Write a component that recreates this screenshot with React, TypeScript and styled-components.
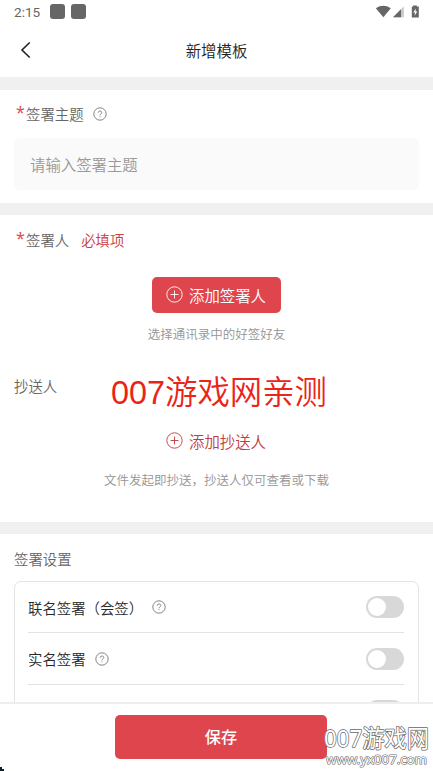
import React from "react";
import styled, { createGlobalStyle, css } from "styled-components";

const Global = createGlobalStyle`
  * { box-sizing: border-box; }
  html, body { margin: 0; background: #fff; overflow: hidden; }
  body { font-family: "Noto Sans CJK SC", "Noto Sans", sans-serif; font-weight: 350; }
  button, input { font-family: inherit; font-weight: inherit; }
`;

const Screen = styled.div`
  position: relative;
  width: 433px;
  height: 771px;
  display: flex;
  flex-direction: column;
  overflow: hidden;
  background: #fff;
`;

const StatusBar = styled.div`
  display: flex;
  align-items: center;
  flex: none;
  height: 24px;
  padding: 0 13px 0 14px;
  color: #666;
  font: 400 13.6px/24px Roboto, sans-serif;
`;

const Clock = styled.span`
  width: 36px;
`;

const Notice = styled.i`
  width: 15px;
  height: 15px;
  margin: 0 6px 1px 0;
  border-radius: 3px;
  background: #666;
`;

const StatusIcons = styled.svg`
  display: block;
  margin-left: auto;
`;

const Header = styled.header`
  display: grid;
  grid-template-columns: 60px 1fr 60px;
  align-items: center;
  flex: none;
  height: 53px;
  padding-bottom: 2px;
`;

const Back = styled.button`
  display: flex;
  padding: 0 0 0 20px;
  border: 0;
  background: none;
`;

const Title = styled.h1`
  margin: 0;
  color: #222;
  font-size: 15.4px;
  font-weight: 350;
  line-height: 24px;
  text-align: center;
`;

const Section = styled.section<{ $height?: number; $band: number; $top?: number }>`
  display: flex;
  flex-direction: column;
  flex: ${(p) => (p.$height ? "none" : "1")};
  ${(p) => p.$height && css`height: ${p.$height}px;`}
  min-height: 0;
  padding: ${(p) => p.$top ?? 14}px 15px 0 14px;
  border-top: ${(p) => p.$band}px solid #f0f0f0;
  overflow: hidden;
`;

const Label = styled.div`
  display: flex;
  align-items: center;
  flex: none;
  height: 22px;
  color: #666;
  font-size: 14.4px;
  line-height: 22px;
  white-space: nowrap;
`;

const Star = styled.span`
  width: 12px;
  padding: 0 0 4px 2px;
  color: #e3484b;
  font: 400 16px/18px "Noto Sans", sans-serif;
`;

const Required = styled.span`
  margin-left: 12px;
  color: #c83c42;
`;

const Help = styled.svg<{ $gap: number }>`
  display: block;
  flex: none;
  margin-left: ${(p) => p.$gap}px;
`;

const Field = styled.input`
  flex: none;
  width: 405px;
  height: 52px;
  margin-top: 13px;
  padding: 0 16px 1px;
  border: 0;
  border-radius: 6px;
  background: #fafafa;
  font-size: 15.4px;
  &::placeholder { color: #999; opacity: 1; }
`;

const AddButton = styled.button<{ $solid?: boolean }>`
  display: flex;
  align-items: center;
  align-self: center;
  flex: none;
  gap: 6px;
  height: 36px;
  margin-left: 1px;
  padding: 0 15.5px 1px 14.5px;
  border: 0;
  border-radius: 5px;
  background: ${(p) => (p.$solid ? "#de454d" : "transparent")};
  color: ${(p) => (p.$solid ? "#fff" : "#bf3b42")};
  font-size: 15.4px;
  line-height: 24px;
`;

const Hint = styled.p`
  margin: 0 0 0 1px;
  color: #949494;
  font-size: 12.5px;
  line-height: 20px;
  text-align: center;
`;

const SignerBlock = styled.div`
  display: flex;
  flex-direction: column;
  height: 124px;
  padding-top: 26px;
  gap: 11px;
`;

const CopyBlock = styled.div`
  display: flex;
  flex-direction: column;
  padding-top: 26px;
  gap: 11px;
`;

const Stamp = styled.div`
  position: absolute;
  left: 111px;
  top: 371px;
  color: #ea2418;
  font: 350 32.4px/44px "Liberation Sans", "Noto Sans CJK SC", sans-serif;
  white-space: nowrap;
`;

const Card = styled.div`
  flex: none;
  margin-top: 11px;
  width: 405px;
  height: 180px;
  padding: 0 14px 0 13px;
  border: 1px solid #e4e4e4;
  border-radius: 7px;
`;

const Row = styled.div`
  display: flex;
  align-items: center;
  height: 52px;
  border-bottom: 1px solid #e3e3e3;
  color: #282828;
  font-size: 14.4px;
  &:first-child { height: 51px; }
`;

const Toggle = styled.span`
  width: 38px;
  height: 22px;
  margin-left: auto;
  padding: 2px 1px;
  border-radius: 11px;
  background: #d8d8d8;
  &::before {
    content: "";
    display: block;
    width: 18px;
    height: 18px;
    margin-left: 0.5px;
    border-radius: 50%;
    background: #fff;
  }
`;

const Footer = styled.footer`
  display: flex;
  justify-content: center;
  flex: none;
  height: 69px;
  padding: 11px 0 0 9px;
  border-top: 2px solid #eee;
`;

const Save = styled.button`
  width: 212px;
  height: 44px;
  padding: 0 0 2px;
  border: 0;
  border-radius: 5px;
  background: #de454d;
  color: #fff;
  font-size: 16.2px;
  font-weight: 500;
`;

const Watermark = styled.svg`
  position: absolute;
  left: 320px;
  top: 716px;
`;

const Corner = styled.svg`
  position: absolute;
  left: 0;
  bottom: 0;
`;

const HelpIcon = ({ gap }: { gap: number }) => (
  <Help $gap={gap} width="14" height="14" viewBox="0 0 14 14" fill="none" stroke="#777">
    <circle cx="7" cy="7" r="6.2" strokeWidth="0.9" />
    <path d="M5.2 5.7C5.2 3.4 8.8 3.5 8.8 5.6C8.8 6.8 7 6.9 7 8.3M7 9.3V10.2" strokeWidth="0.9" />
  </Help>
);

const PlusIcon = () => (
  <svg width="17" height="17" viewBox="0 0 17 17" fill="none" stroke="currentColor" strokeWidth="0.9">
    <circle cx="8.5" cy="8.5" r="7.7" />
    <path d="M8.5 4.5V12.5M4.5 8.5H12.5" />
  </svg>
);

const settings = [
  { name: "联名签署（会签）", gap: 9 },
  { name: "实名签署", gap: 9 },
  { name: "", gap: 0 },
];

export default function App() {
  return (
    <>
      <Global />
      <Screen>
        <StatusBar>
          <Clock>2:15</Clock>
          <Notice />
          <Notice />
          <StatusIcons width="45" height="14" viewBox="0 0 45 14" fill="#666">
            <path d="M0.8 3.2Q8.2-1.7 15.8 3.2L8.4 12.3Z" />
            <path d="M28.8 1.5V12.3H18Z" fill="#c8c8c8" />
            <path d="M26 4.3V12.3H18Z" />
            <path d="M38.2 0.4H41.8V1.4H43.8V12.6H36.8V1.4H38.2Z" />
            <path d="M40.8 3.6L38.3 7.6H40L39.6 10.8L42.3 6.6H40.6Z" fill="#fff" />
          </StatusIcons>
        </StatusBar>
        <Header>
          <Back aria-label="返回">
            <svg width="12" height="18" viewBox="0 0 12 18" fill="none" stroke="#222" strokeWidth="1.6">
              <path d="M9.7 1.5L2 9L9.7 16.5" />
            </svg>
          </Back>
          <Title>新增模板</Title>
        </Header>
        <Section $height={126} $band={13} $top={13}>
          <Label>
            <Star>*</Star>签署主题<HelpIcon gap={9} />
          </Label>
          <Field placeholder="请输入签署主题" />
        </Section>
        <Section $height={319} $band={12}>
          <Label>
            <Star>*</Star>签署人<Required>必填项</Required>
          </Label>
          <SignerBlock>
            <AddButton $solid><PlusIcon />添加签署人</AddButton>
            <Hint>选择通讯录中的好签好友</Hint>
          </SignerBlock>
          <Label>抄送人</Label>
          <CopyBlock>
            <AddButton><PlusIcon />添加抄送人</AddButton>
            <Hint>文件发起即抄送，抄送人仅可查看或下载</Hint>
          </CopyBlock>
        </Section>
        <Section $band={12}>
          <Label>签署设置</Label>
          <Card>
            {settings.map((s, i) => (
              <Row key={i}>
                {s.name}
                {s.name && <HelpIcon gap={s.gap} />}
                <Toggle />
              </Row>
            ))}
          </Card>
        </Section>
        <Footer>
          <Save>保存</Save>
        </Footer>
        <Stamp>007游戏网亲测</Stamp>
        <Watermark
          width="113"
          height="55"
          fill="#fff"
          stroke="#666"
          strokeWidth="1.5"
          paintOrder="stroke"
          strokeLinejoin="round"
          fontWeight="400"
          fontFamily='"Noto Sans", "Noto Sans CJK SC", sans-serif'
        >
          <text x="4" y="31" fontSize="24" textLength="105" lengthAdjust="spacingAndGlyphs">007游戏网</text>
          <text x="6" y="48" fontSize="13" strokeWidth="1.2" textLength="101" lengthAdjust="spacingAndGlyphs">www.yx007.com</text>
        </Watermark>
        <Corner width="4" height="4"><path d="M0 0H2V2H4V4H0Z" fill="#102027" /></Corner>
      </Screen>
    </>
  );
}
